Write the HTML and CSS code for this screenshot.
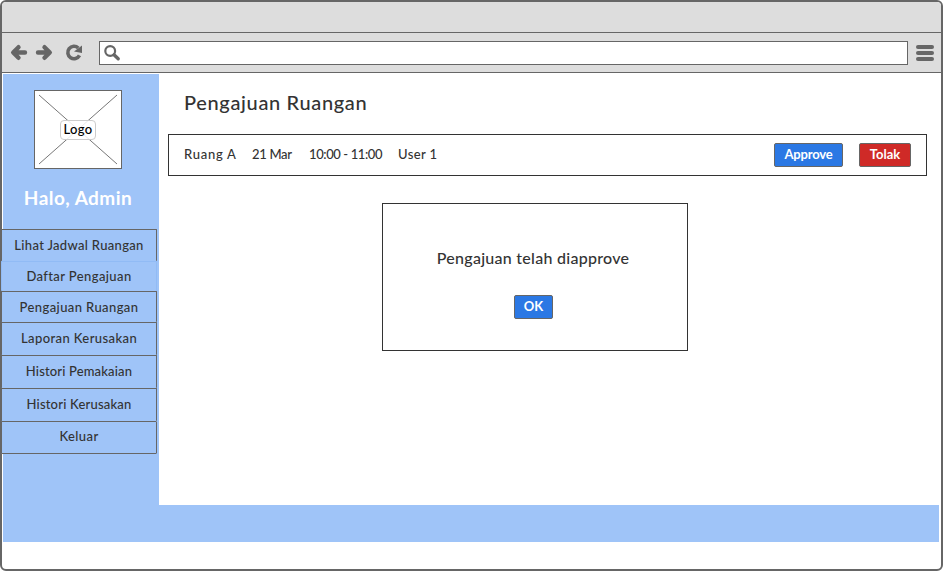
FILE: index.html
```html
<!DOCTYPE html>
<html lang="id">
<head>
<meta charset="utf-8">
<title>Pengajuan Ruangan</title>
<link rel="stylesheet" href="styles.css">
</head>
<body>
<div class="window">
  <div class="titlebar"></div>
  <div class="toolbar">
    <svg class="nav-icons" width="76" height="20" viewBox="0 0 76 20" fill="none" stroke="#666" stroke-width="4.400" stroke-linecap="round" stroke-linejoin="round">
      <path d="M16 9.500H5M9.500 4.200L4.200 9.500L9.500 14.800"/>
      <path d="M29 9.500H40M35.500 4.200L40.800 9.500L35.500 14.800"/>
      <path d="M70.500 12.400A6.200 6.200 0 1 1 69.300 5" stroke-width="3.600" stroke-linecap="butt"/>
      <path d="M73 2.500V10L65 8.500Z" fill="#666" stroke="none"/>
    </svg>
    <div class="address">
      <svg width="18" height="18" viewBox="0 0 18 18" fill="none" stroke="#666">
        <circle cx="6.200" cy="6" r="4.900" stroke-width="2.200"/>
        <path d="M10 9.800L14.200 13.800" stroke-width="3.400" stroke-linecap="round"/>
      </svg>
    </div>
    <div class="menu"><span></span><span></span><span></span></div>
  </div>
  <div class="page">
    <div class="columns">
      <aside class="sidebar">
        <div class="logo">
          <svg width="86" height="77" viewBox="0 0 86 77" stroke="#777" stroke-width="1"><path d="M4 4L82 73M82 4L4 73"/></svg>
          <span>Logo</span>
        </div>
        <div class="greeting">Halo, Admin</div>
        <nav>
          <a class="n1">Lihat Jadwal Ruangan</a>
          <a class="n2 active">Daftar Pengajuan</a>
          <a class="n3">Pengajuan Ruangan</a>
          <a class="n4">Laporan Kerusakan</a>
          <a class="n5">Histori Pemakaian</a>
          <a class="n6">Histori Kerusakan</a>
          <a class="n7">Keluar</a>
        </nav>
      </aside>
      <main>
        <h1>Pengajuan Ruangan</h1>
        <div class="request">
          <span class="room">Ruang A</span>
          <span class="date">21 Mar</span>
          <span class="time">10:00 - 11:00</span>
          <span class="user">User 1</span>
          <button class="btn approve">Approve</button>
          <button class="btn reject">Tolak</button>
        </div>
        <section class="dialog">
          <p>Pengajuan telah diapprove</p>
          <button class="btn ok">OK</button>
        </section>
      </main>
    </div>
    <footer></footer>
  </div>
</div>
</body>
</html>
```
FILE: styles.css
```css
* { box-sizing: border-box; }
body { margin: 0; background: #fff; font: 500 13px/16px Lato, "Open Sans", sans-serif; color: #333; }
.window { width: 943px; height: 571px; border: 2px solid #666; border-radius: 6px; background: #fff; }
.titlebar { height: 31px; background: #ddd; border-bottom: 1px solid #666; border-radius: 4px 4px 0 0; }
.toolbar { height: 40px; background: #ddd; border-bottom: 1px solid #666; display: flex; align-items: center; padding: 0 7px; }
.nav-icons { flex: none; }
.address { width: 809px; height: 24px; margin-left: 14px; border: 1px solid #666; background: #fff; padding: 3px 0 0 4px; }
.address svg { display: block; }
.menu { width: 18px; margin-left: 8px; display: grid; gap: 2px; }
.menu span { height: 4px; border-radius: 2px; background: #666; }
.page { padding: 1px 2px 0 1px; }
.columns { display: flex; height: 431px; }
.sidebar { width: 156px; background: #9fc4f8; padding-top: 16px; flex: none; }
.logo { width: 88px; height: 79px; margin-left: 31px; border: 1px solid #666; background: #fff; display: grid; place-items: center; }
.logo > * { grid-area: 1 / 1; }
.logo span { width: 36px; height: 20px; border: 1px solid #ccc; border-radius: 4px; background: rgba(255, 255, 255, .85); color: #000; line-height: 16px; letter-spacing: .3px; text-align: center; white-space: nowrap; }
.greeting { margin-top: 17px; height: 24px; font-size: 19px; line-height: 24px; font-weight: 700; letter-spacing: .45px; color: #fff; text-align: center; padding-right: 6px; white-space: nowrap; }
nav { margin: 19px 0 0 -2px; width: 156px; letter-spacing: .4px; }
nav a { display: block; height: 31px; line-height: 31px; border-top: 1px solid #666; border-right: 1px solid #666; background: #9fc4f8; border-radius: 1px; text-align: center; white-space: nowrap; border-left: 1px solid #666; }
nav .n1 { height: 32px; letter-spacing: .33px; }
nav .active { height: 30px; line-height: 29px; border-color: #91bbf5; }
nav .n4, nav .n5, nav .n6 { height: 33px; }
nav .n5 { letter-spacing: .15px; }
nav .n6 { letter-spacing: .2px; }
nav .n7 { height: 33px; line-height: 29px; border-bottom: 1px solid #666; }
main { padding: 14px 0 0 9px; flex: 1; }
h1 { margin: 0 0 18px 16px; font-size: 20px; line-height: 28px; font-weight: 500; letter-spacing: .65px; }
.request { width: 759px; height: 42px; border: 1px solid #333; display: flex; align-items: center; padding: 0 15px; white-space: nowrap; }
.request span { height: 18px; }
.room { width: 68px; letter-spacing: .75px; }
.date { width: 57px; letter-spacing: -.3px; }
.time { width: 89px; letter-spacing: -.4px; }
.user { width: 60px; letter-spacing: .4px; }
.btn { font: 700 13px/20px Lato, sans-serif; height: 24px; padding: 0 0 2px; border: 1px solid #666; border-radius: 2px; color: #fff; text-align: center; white-space: nowrap; }
.approve { width: 69px; margin-left: auto; letter-spacing: -.2px; background: #2b78e4; }
.reject { width: 52px; margin-left: 16px; background: #cf2a27; }
.dialog { width: 306px; height: 148px; margin: 27px 0 0 214px; border: 1px solid #333; display: flex; flex-direction: column; align-items: center; padding-top: 42px; }
.dialog p { margin: 0; padding-right: 4px; font-size: 16px; line-height: 24px; letter-spacing: .27px; white-space: nowrap; }
.ok { width: 39px; margin-top: 25px; margin-right: 3px; background: #2b78e4; }
footer { height: 37px; background: #9fc4f8; }
```
